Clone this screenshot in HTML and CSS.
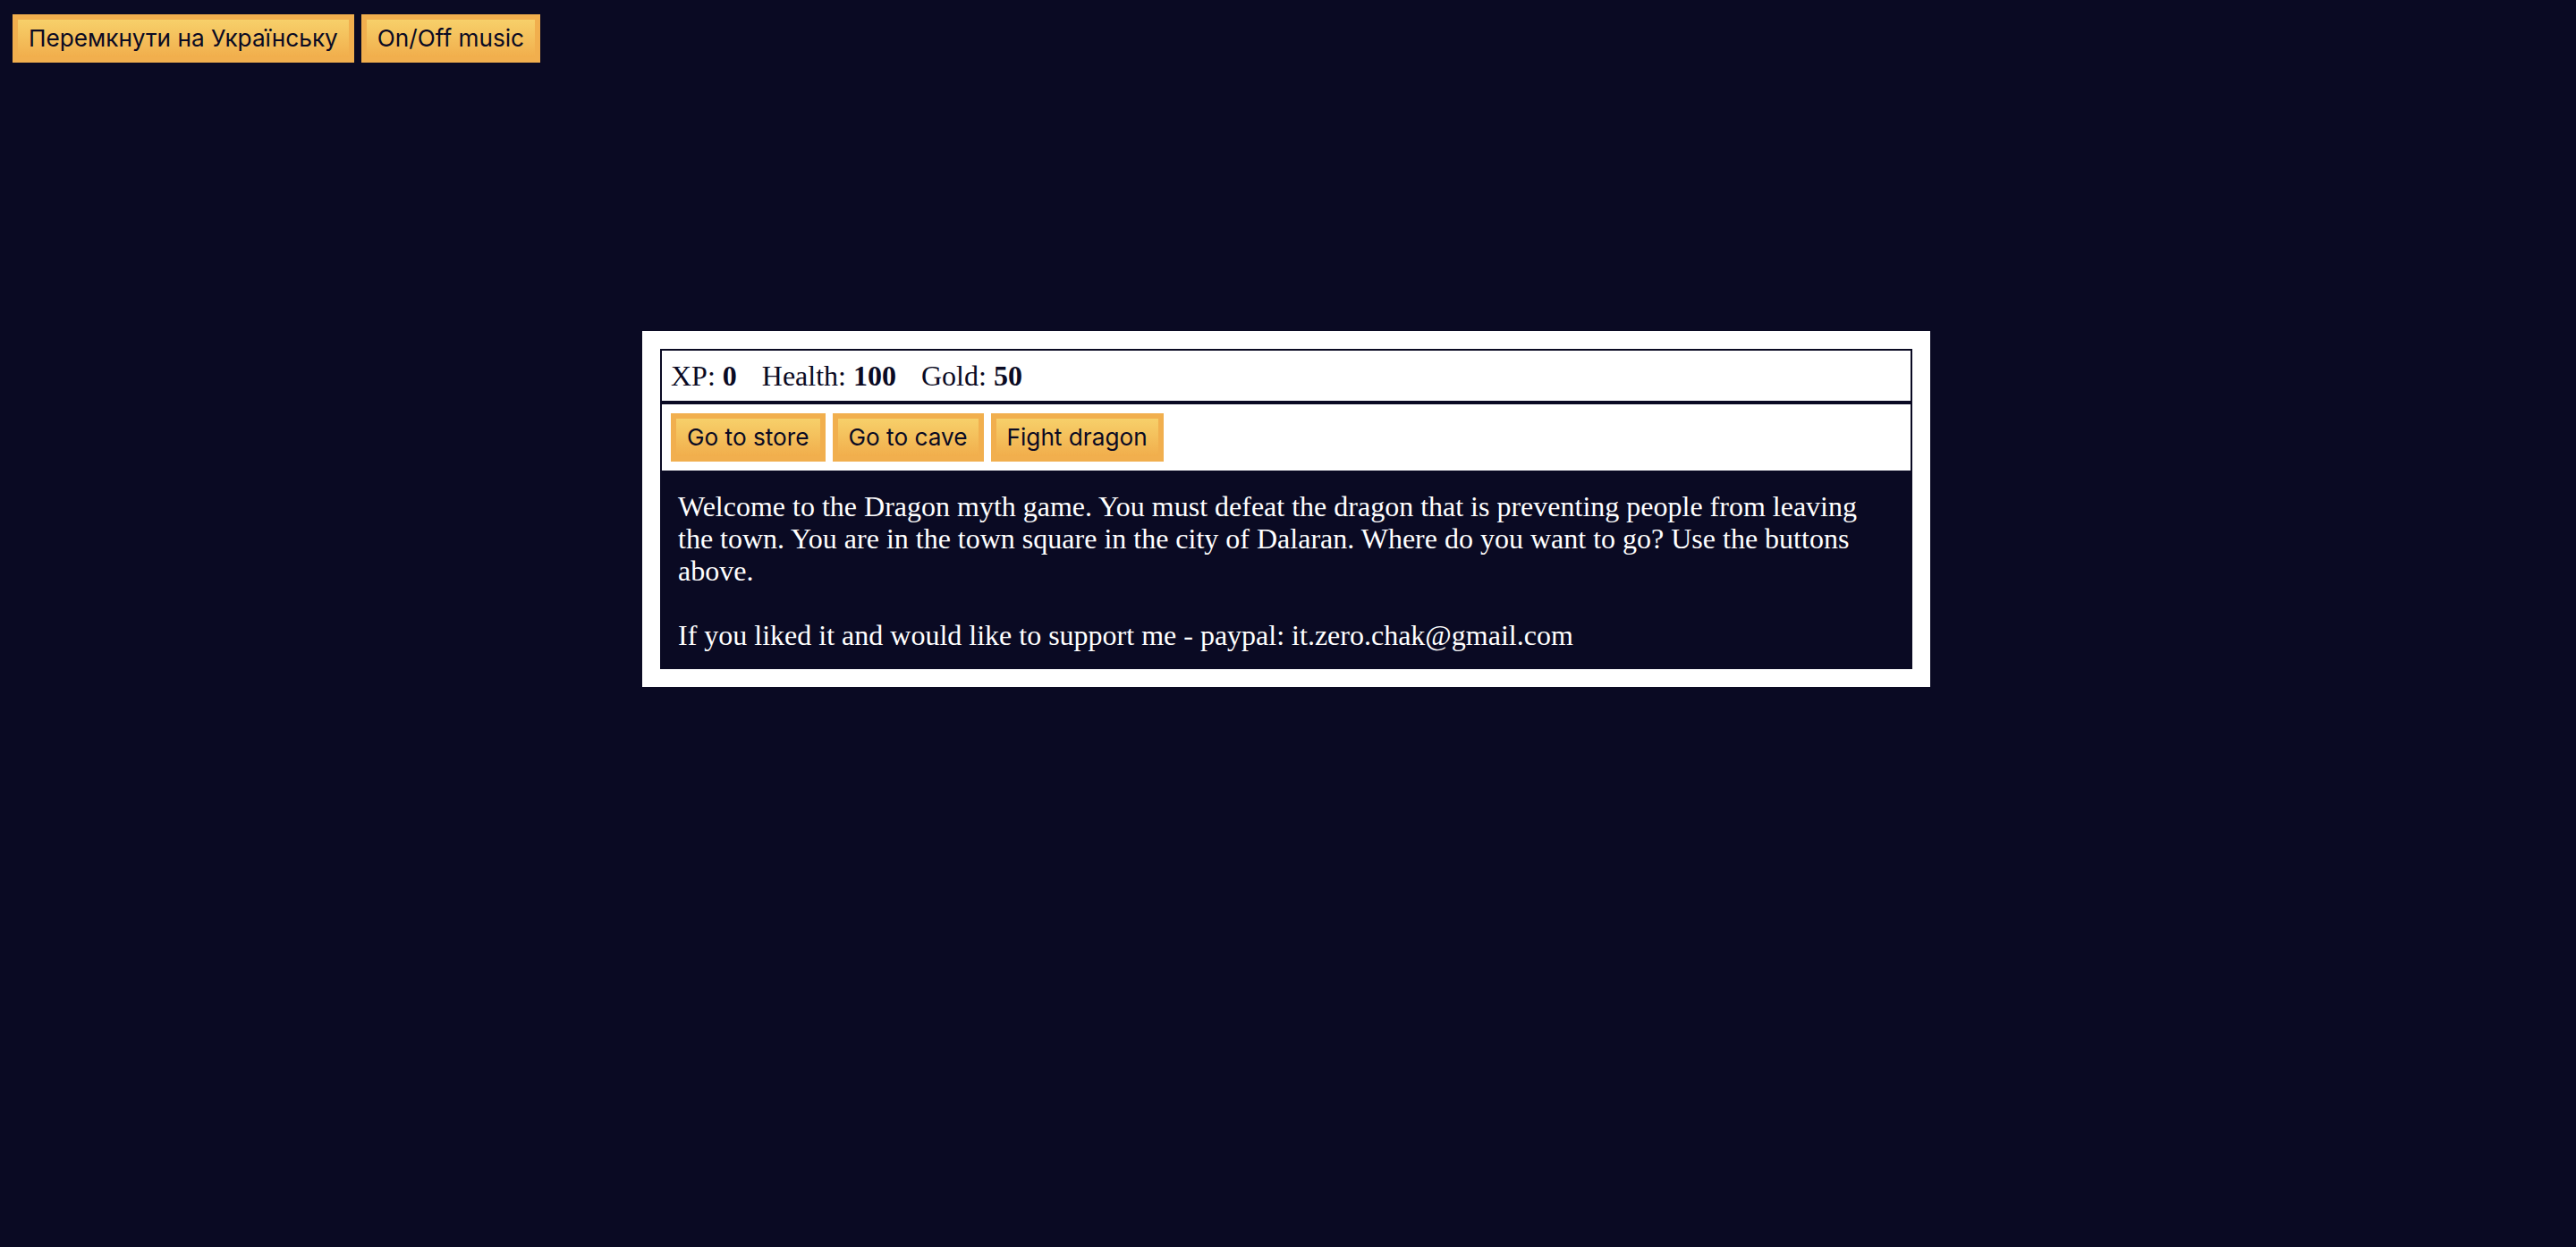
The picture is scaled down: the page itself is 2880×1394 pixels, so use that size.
FILE: index.html
```html
<!DOCTYPE html>
<html lang="en">
<head>
<meta charset="utf-8">
<title>Dragon myth</title>
<link rel="stylesheet" href="styles.css">
</head>
<body>
<div class="topbar">
  <button class="btn">Перемкнути на Українську</button>
  <button class="btn">On/Off music</button>
</div>
<div class="game">
  <div class="stats">
    <span class="stat">XP: <strong>0</strong></span>
    <span class="stat">Health: <strong>100</strong></span>
    <span class="stat">Gold: <strong>50</strong></span>
  </div>
  <div class="controls">
    <button class="btn">Go to store</button>
    <button class="btn">Go to cave</button>
    <button class="btn">Fight dragon</button>
  </div>
  <div class="text">Welcome to the Dragon myth game. You must defeat the dragon that is preventing people from leaving the town. You are in the town square in the city of Dalaran. Where do you want to go? Use the buttons above.<br><br>If you liked it and would like to support me - paypal: it.zero.chak@gmail.com</div>
</div>
</body>
</html>
```

FILE: styles.css
```css
html {
  background: #0a0a23;
}
body {
  margin: 16px 18px 0 14px;
  background: #0a0a23;
  font-family: "Liberation Serif", "Times New Roman", serif;
  font-size: 32px;
  line-height: 36px;
}
.topbar {
  display: flex;
  gap: 8px;
}
.btn {
  box-sizing: border-box;
  height: 54px;
  padding: 0 12px;
  margin: 0;
  font-family: Inter, "Liberation Sans", sans-serif;
  font-size: 26.2px;
  line-height: 42px;
  color: #0a0a23;
  background-color: #f1ae4c;
  background-image: linear-gradient(#f7d06a, #f1ae4c);
  border: 6px solid #f1af4e;
  border-radius: 0;
  cursor: pointer;
}
.game {
  max-width: 1400px;
  margin: 300px auto 0;
  padding: 20px;
  background: #ffffff;
  color: #ffffff;
}
.stats {
  border: 2px solid #0a0a23;
  padding: 10px;
  color: #0a0a23;
}
.stat {
  padding-right: 20px;
}
.controls {
  display: flex;
  gap: 8px;
  border: 2px solid #0a0a23;
  padding: 10px;
}
.text {
  background: #0a0a23;
  color: #ffffff;
  padding: 20px;
}
```
